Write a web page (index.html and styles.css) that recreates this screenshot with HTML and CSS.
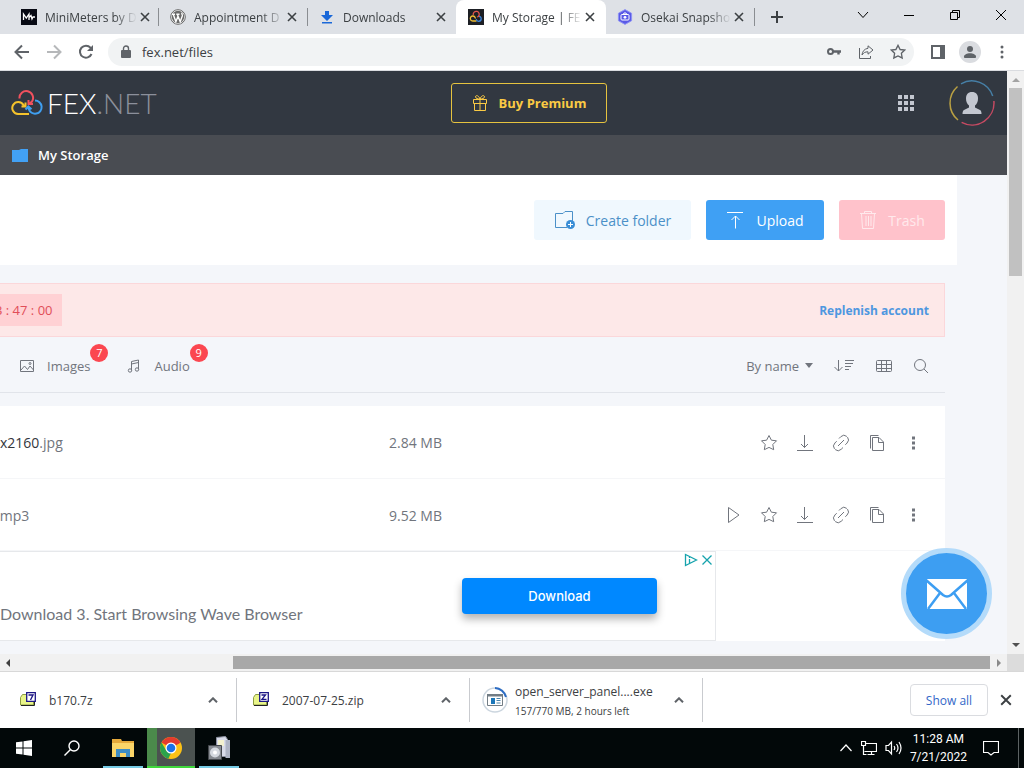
FILE: index.html
```html
<!DOCTYPE html>
<html lang="en">
<head>
<meta charset="UTF-8">
<meta name="viewport" content="width=device-width, initial-scale=1.0">
<title>My Storage | FEX.NET</title>
<link rel="stylesheet" href="styles.css">
</head>
<body>

<!-- shared icons -->
<svg class="sprite" width="0" height="0" aria-hidden="true">
    <symbol id="x" viewBox="0 0 10 10"><path d="M1 1l8 8M9 1L1 9"/></symbol>
    <symbol id="up" viewBox="0 0 10 6"><path d="M1 5.300l4-4 4 4"/></symbol>
    <symbol id="play" viewBox="0 0 18 18"><path d="M4.500 1.500v15L15 9z"/></symbol>
    <symbol id="star" viewBox="0 0 18 18"><path d="M9 1.500l2.400 4.700 5.100.6-3.700 3.700.9 5.200L9 13.400l-4.700 2.300.9-5.200L1.500 6.800l5.100-.6z"/></symbol>
    <symbol id="down" viewBox="0 0 18 18"><path d="M8.500 1v12.500M5 10l3.500 3.500L12 10M1 16.500h16"/></symbol>
    <symbol id="link" viewBox="0 0 18 18"><path d="M6 12l6-6M7 4.500l1.800-1.800a4.400 4.400 0 0 1 6.300 0 4.400 4.400 0 0 1 0 6.300l-1.800 1.800M11 13.500l-1.800 1.800a4.400 4.400 0 0 1-6.300 0 4.400 4.400 0 0 1 0-6.300l1.800-1.800" stroke-dasharray="9 1"/></symbol>
    <symbol id="copy" viewBox="0 0 18 18"><path d="M2.500 14.500v-13h8M4.500 3.500h6.500l4.500 4.500v8.500h-11zM10.500 3.500v5h5"/></symbol>
    <symbol id="dots" viewBox="0 0 18 18"><path class="solid" d="M8 2.500h3v3H8zM8 7.500h3v3H8zM8 12.500h3v3H8z"/></symbol>
    <symbol id="archive" viewBox="0 0 16 16"><path fill="#e9f58a" stroke="#8d9c42" d="M.5 5.500l2-3h11v10.500H.5z"/><path d="M1 13.500h13.500v-4" fill="none" stroke="#222"/><path fill="#fff" stroke="#1d1685" stroke-width="1.300" d="M6.700.7h8.600v8.600H6.700z"/></symbol>
</svg>

<div class="tabs">
    <div class="tab">
        <svg class="favicon" viewBox="0 0 16 16"><path fill="#080a14" d="M0 0h16v16H0z"/><path d="M2.500 11V5l2.800 4L8 5v6M8 8.500l2-2 1 3.500 1-2h2" fill="none" stroke="#fff" stroke-width="1.300"/></svg>
        <span class="tab-title">MiniMeters by D</span>
        <button class="tab-close" aria-label="Close tab"><svg><use href="#x"/></svg></button>
    </div>
    <div class="tab">
        <svg class="favicon" viewBox="0 0 16 16"><circle cx="8" cy="8" r="7.300" fill="#fff" stroke="#666" stroke-width="1"/><circle cx="8" cy="8" r="6.200" fill="#6a6a6a"/><path d="M2 5.200h3M6.300 5.200h3.200M3.200 5.200l2.700 7.500L8 7.300M7.300 5.200l2.900 7.500L12.300 7c.4-1.200-.8-2-.4-3.200" fill="none" stroke="#fff" stroke-width="1.400"/></svg>
        <span class="tab-title">Appointment D</span>
        <button class="tab-close" aria-label="Close tab"><svg><use href="#x"/></svg></button>
    </div>
    <div class="tab">
        <svg class="favicon" viewBox="0 0 16 16"><path fill="#1a68d8" d="M6 2h4v4h4l-6 6-6-6h4zM3 13h10v1.500H3z"/></svg>
        <span class="tab-title">Downloads</span>
        <button class="tab-close" aria-label="Close tab"><svg><use href="#x"/></svg></button>
    </div>
    <div class="tab active">
        <svg class="favicon" viewBox="0 0 16 16"><path fill="#1d1f24" d="M0 0h16v16H0z"/><g fill="none" stroke-width="1.300"><path stroke="#e4544e" d="M5.300 6a3 3 0 1 1 5 1.500L9 8"/><path stroke="#f0be35" d="M8.500 12H4.800a2.500 2.500 0 1 1 2-4l.8 1.500"/><path stroke="#3c86dc" d="M11 7.300a2.500 2.500 0 1 1-2.800 2.900"/></g></svg>
        <span class="tab-title">My Storage | FE</span>
        <button class="tab-close" aria-label="Close tab"><svg><use href="#x"/></svg></button>
    </div>
    <div class="tab">
        <svg class="favicon" viewBox="0 0 16 16"><path fill="#5a5ae6" stroke="#8f93f5" d="M8 .6l6.600 3.700v7.400L8 15.400l-6.600-3.700V4.300z"/><rect x="4" y="5.500" width="8" height="5.500" rx="1" fill="none" stroke="#fff"/><circle cx="8" cy="8.300" r="1.400" fill="#fff"/><path d="M6.500 5l.5-1h2l.5 1" stroke="#fff" fill="none"/></svg>
        <span class="tab-title">Osekai Snapsho</span>
        <button class="tab-close" aria-label="Close tab"><svg><use href="#x"/></svg></button>
    </div>
    <button class="new-tab" aria-label="New tab"><svg width="12" height="12" viewBox="0 0 12 12"><path d="M6 0v12M0 6h12"/></svg></button>
    <div class="window-buttons">
        <button aria-label="Search tabs"><svg viewBox="0 0 12 12"><path d="M1 3l5 5.500L11 3"/></svg></button>
        <button aria-label="Minimize"><svg viewBox="0 0 12 12"><path d="M1 6.500h10"/></svg></button>
        <button aria-label="Restore"><svg viewBox="0 0 12 12"><path d="M1.500 3.500h7v7h-7zM3.500 3V1.500h7v7H9"/></svg></button>
        <button aria-label="Close"><svg viewBox="0 0 12 12"><path d="M1 1l10 10M11 1L1 11"/></svg></button>
    </div>
</div>

<div class="navbar">
    <button aria-label="Back"><svg viewBox="0 0 16 16"><path d="M15 8H2M8 1.500L1.500 8 8 14.500"/></svg></button>
    <button class="faded" aria-label="Forward"><svg viewBox="0 0 16 16"><path d="M1 8h13M8 1.500L14.500 8 8 14.500"/></svg></button>
    <button aria-label="Reload"><svg viewBox="0 0 16 16"><path d="M13.500 10a6 6 0 1 1-1-6.300L14 5.500"/><path class="fill" d="M15 1v6H9z"/></svg></button>
    <div class="address">
        <svg class="lock" viewBox="0 0 10 14"><path d="M1 5h8a1 1 0 0 1 1 1v6a1 1 0 0 1-1 1H1a1 1 0 0 1-1-1V6a1 1 0 0 1 1-1z" fill="#5f6368"/><path d="M2.500 6V3.500a2.500 2.500 0 0 1 5 0V6" fill="none" stroke="#5f6368" stroke-width="1.400"/></svg>
        <input type="text" value="fex.net/files" aria-label="Address">
        <button aria-label="Passwords"><svg viewBox="0 0 16 16"><circle cx="4.500" cy="7.500" r="2.500"/><path d="M7 7.500h8M12.500 7.500v3" stroke-width="2.400"/></svg></button>
        <button aria-label="Share"><svg class="thin" viewBox="0 0 16 16"><path d="M1.500 4v10.500h11V12M10 1.800l5 4.200-5 4.200V7.800c-3 0-4.500 1-6 3.200.3-3.700 2.500-6.200 6-6.700z"/></svg></button>
        <button aria-label="Bookmark"><svg class="medium" viewBox="0 0 18 18"><use href="#star"/></svg></button>
    </div>
    <button aria-label="Side panel"><svg viewBox="0 0 16 16"><path d="M2 2h12v12H2z"/><path class="fill" d="M10 2h4v12h-4z"/></svg></button>
    <button class="profile" aria-label="Profile"><svg viewBox="0 0 16 16"><circle class="fill" cx="8" cy="5" r="3"/><path class="fill" d="M2 14v-1.500c0-2 3-3.300 6-3.300s6 1.300 6 3.300V14z"/></svg></button>
    <button aria-label="Menu"><svg viewBox="0 0 16 16"><circle class="fill" cx="8" cy="3" r="1.500"/><circle class="fill" cx="8" cy="8" r="1.500"/><circle class="fill" cx="8" cy="13" r="1.500"/></svg></button>
</div>

<div class="viewport">
    <div class="page">
        <header class="site-header">
            <a class="logo" href="#">
                <svg width="32" height="26" viewBox="0 0 32 26" fill="none" stroke-width="2"><path stroke="#f0515e" d="M8.500 8.500a6.800 6.800 0 1 1 12.500 3l-2 1.800M17.500 10v4h4.500"/><path stroke="#f5c32c" d="M18 24H7a6 6 0 1 1 5.500-9l1 1.500M14.500 12.500v4h-4"/><path stroke="#3f9ff0" d="M24 10.500a6.600 6.600 0 1 1-6.300 8.500l-.2-2M14.500 19.500l2.800-3 3.200 2.800"/></svg>
                <span>FEX<em>.NET</em></span>
            </a>
            <button class="premium">
                <svg width="16" height="18" viewBox="0 0 16 18"><path d="M1.500 5.500h13v4h-13zM2.500 9.500h11v7h-11zM8 5.500v11M8 5C6 5 3.500 4.500 3.500 2.800S6.500.8 8 5c1.500-4.200 4.500-3.900 4.500-2.200S10 5 8 5z"/></svg>
                Buy Premium
            </button>
            <div class="account">
                <button class="apps" aria-label="Services"><svg width="16" height="16" viewBox="0 0 16 16"><path d="M0 0h4v4H0zM6 0h4v4H6zM12 0h4v4h-4zM0 6h4v4H0zM6 6h4v4H6zM12 6h4v4h-4zM0 12h4v4H0zM6 12h4v4H6zM12 12h4v4h-4z"/></svg></button>
                <button class="avatar" aria-label="Account"><svg width="46" height="46" viewBox="0 0 46 46" fill="none" stroke-width="1.500"><path stroke="#467fa6" d="M12 3.800A22 22 0 0 1 43.700 16"/><path stroke="#c64a62" d="M44.900 21a22 22 0 0 1-32.300 21.300"/><path stroke="#b9a043" d="M9 40A22 22 0 0 1 8.500 6.500"/><path fill="#c3c7d0" d="M23 12c4 0 6 2.500 6 6.500 0 3-1 5.500-3 7v2l5 2.500c1 .5 1.500 2 1.500 4h-19c0-2 .5-3.500 1.500-4l5-2.500v-2c-2-1.500-3-4-3-7 0-4 2-6.500 6-6.500z"/></svg></button>
            </div>
        </header>
        <nav class="crumbs">
            <svg width="16" height="14" viewBox="0 0 16 14"><path fill="#42a1f5" d="M0 2h7l2-1h7v13H0z"/></svg>
            <a href="#">My Storage</a>
        </nav>

        <div class="actions">
            <button class="btn create"><svg width="22" height="20" viewBox="0 0 22 20"><path d="M13 17.500H1.500v-14H9l2-2h7.500V11"/><circle cx="16.500" cy="14.500" r="4.500" fill="#3a8ed6" stroke="none"/><path d="M16.500 12v5M14 14.500h5" stroke="#fff"/></svg>Create folder</button>
            <button class="btn upload"><svg width="18" height="18" viewBox="0 0 18 18"><path d="M1 1.500h16M9.500 17.500V5M5.500 9l4-4 4 4"/></svg>Upload</button>
            <button class="btn trash"><svg width="18" height="20" viewBox="0 0 18 20"><path d="M1 3.500h16M5.500 3.500v-2h7v2M2.500 3.500l1 15h11l1-15M7 6v10M9.500 6v10M12 6v10"/></svg>Trash</button>
        </div>

        <div class="alert">
            <span class="timer">3 : 47 : 00</span>
            <a href="#">Replenish account</a>
        </div>

        <div class="filters">
            <button class="filter"><svg width="16" height="16" viewBox="0 0 16 16"><path d="M1.500 2.500h13v11h-13zM2 12l3.500-4 3 3.500L11 8l3.500 4"/><circle cx="11" cy="5.500" r="1"/></svg>Images<span class="badge">7</span></button>
            <button class="filter"><svg width="16" height="16" viewBox="0 0 16 16"><path d="M5.500 12.500v-9l7-1.500v9.500M5.500 6l7-1.500"/><circle cx="4" cy="12.500" r="1.700"/><circle cx="11" cy="11.500" r="1.700"/></svg>Audio<span class="badge">9</span></button>
            <button class="sort">By name <span class="caret"></span></button>
            <button aria-label="Sort order"><svg width="22" height="16" viewBox="0 0 22 16"><path d="M5.500 2v11M1.500 9l4 4 4-4M12 2.500h9M12 5.500h8M12 8.500h6M12 11.500h4"/></svg></button>
            <button aria-label="Grid view"><svg width="18" height="16" viewBox="0 0 18 16"><rect x="1.500" y="2.500" width="15" height="11" rx="1"/><path d="M1.500 6.500h15M1.500 10.500h15M6.500 2.500v11M11.500 2.500v11"/></svg></button>
            <button aria-label="Search"><svg width="16" height="16" viewBox="0 0 16 16"><circle cx="7" cy="7" r="5.500"/><path d="M11 11l4 4"/></svg></button>
        </div>

        <div class="files">
            <table>
                <tr>
                    <td class="name"><span><b>0x2160</b>.jpg</span></td>
                    <td class="size">2.84 MB</td>
                    <td><div class="tools">
                        <button aria-label="Favourite"><svg><use href="#star"/></svg></button>
                        <button aria-label="Download"><svg><use href="#down"/></svg></button>
                        <button aria-label="Get link"><svg><use href="#link"/></svg></button>
                        <button aria-label="Copy"><svg><use href="#copy"/></svg></button>
                        <button aria-label="More"><svg><use href="#dots"/></svg></button>
                    </div></td>
                </tr>
                <tr>
                    <td class="name"><span class="short">.mp3</span></td>
                    <td class="size">9.52 MB</td>
                    <td><div class="tools">
                        <button aria-label="Play"><svg><use href="#play"/></svg></button>
                        <button aria-label="Favourite"><svg><use href="#star"/></svg></button>
                        <button aria-label="Download"><svg><use href="#down"/></svg></button>
                        <button aria-label="Get link"><svg><use href="#link"/></svg></button>
                        <button aria-label="Copy"><svg><use href="#copy"/></svg></button>
                        <button aria-label="More"><svg><use href="#dots"/></svg></button>
                    </div></td>
                </tr>
            </table>
            <div class="ad">
                <p>Download 3. Start Browsing Wave Browser</p>
                <button class="ad-download">Download</button>
                <div class="ad-marks">
                    <a href="#" aria-label="About this ad"><svg width="14" height="14" viewBox="0 0 14 14"><path d="M1.500 1.500v11l11-5.500zM5.500 6v4M5.500 4v1"/></svg></a>
                    <button aria-label="Close ad"><svg width="12" height="14" viewBox="0 0 12 14"><path d="M1.500 2.500l9 9M10.500 2.500l-9 9"/></svg></button>
                </div>
            </div>
        </div>

        <button class="chat" aria-label="Contact support">
            <svg width="42" height="32" viewBox="0 0 42 32"><path fill="#fff" d="M1 1h40v30H1z"/><path d="M0 2l17 15q4 3 8 0L42 2M2 31l12-16M40 31L28 15" fill="none" stroke="#3d9ef2" stroke-width="2.500"/></svg>
        </button>
    </div>
    <div class="vscroll">
        <svg viewBox="0 0 8 4"><path fill="#a3a3a3" d="M0 4l4-4 4 4z"/></svg>
        <div class="vthumb"></div>
        <svg viewBox="0 0 8 4"><path fill="#505050" d="M0 0l4 4 4-4z"/></svg>
    </div>
</div>
<div class="hscroll">
    <svg viewBox="0 0 4 8"><path fill="#404040" d="M4 0L0 4l4 4z"/></svg>
    <div class="track"><div class="hspace"></div><div class="hthumb"></div></div>
    <svg viewBox="0 0 4 8"><path fill="#8a8a8a" d="M0 0l4 4-4 4z"/></svg>
    <div class="corner"></div>
</div>

<div class="shelf">
    <div class="download">
        <svg class="file-icon" viewBox="0 0 16 16"><use href="#archive"/><path d="M8.500 3h4.500l-2.500 5" fill="none" stroke="#1d1685" stroke-width="1.400"/></svg>
        <span>b170.7z</span>
        <button aria-label="Options"><svg><use href="#up"/></svg></button>
    </div>
    <div class="download">
        <svg class="file-icon" viewBox="0 0 16 16"><use href="#archive"/><path d="M8.500 3h4L9 7.300h4.500" fill="none" stroke="#1d1685" stroke-width="1.300"/></svg>
        <span>2007-07-25.zip</span>
        <button aria-label="Options"><svg><use href="#up"/></svg></button>
    </div>
    <div class="download running">
        <svg class="progress" viewBox="0 0 26 26"><circle cx="13" cy="13" r="12" fill="none" stroke="#ccd6df" stroke-width="1.500"/><path d="M13 1a12 12 0 0 1 11 9" fill="none" stroke="#2c6cc4" stroke-width="2"/><path fill="#fff" stroke="#727d85" d="M5.500 7.500h15v11h-15z"/><path fill="#727d85" d="M5 7h16v2.500H5z"/><path fill="#1c77b9" d="M9 11h4v6H9z"/><path d="M14.500 11.500h4M14.500 13.500h4M14.500 16h4" stroke="#4b84aa"/></svg>
        <span>open_server_panel....exe<small>157/770 MB, 2 hours left</small></span>
        <button aria-label="Options"><svg><use href="#up"/></svg></button>
    </div>
    <button class="show-all">Show all</button>
    <button class="shelf-close" aria-label="Close downloads bar"><svg><use href="#x"/></svg></button>
</div>

<div class="taskbar">
    <button aria-label="Start"><svg width="16" height="16" viewBox="0 0 16 16" fill="#fff"><path d="M0 2.300l6.500-.9v6.100H0zM7.500 1.200L16 0v7.500H7.500zM0 8.500h6.500v6.100L0 13.700zM7.500 8.500H16V16l-8.500-1.200z"/></svg></button>
    <button aria-label="Search"><svg width="16" height="16" viewBox="0 0 16 16" fill="none" stroke="#fff" stroke-width="1.400"><circle cx="10" cy="6" r="5"/><path d="M6.500 9.500l-6 6"/></svg></button>
    <div class="windows">
        <button aria-label="File Explorer"><svg width="22" height="20" viewBox="0 0 22 20"><path fill="#e5a93b" d="M0 1h9l1 2h12v16H0z"/><path fill="#fbd568" d="M0 5h22v14H0z"/><path fill="#3f8dc4" d="M4 11h14v8h-4v-4H8v4H4z"/></svg></button>
        <button class="current" aria-label="Google Chrome"><svg width="22" height="22" viewBox="0 0 22 22"><circle cx="11" cy="11" r="11" fill="#fbc116"/><path fill="#e33b2e" d="M11 11L1.500 5.500a11 11 0 0 1 19 0z"/><path fill="#e33b2e" d="M11 5.500h9.500L11 11z"/><path fill="#2ba24c" d="M1.500 5.500L6.500 14l4.500 2-2.700 5.700A11 11 0 0 1 1.500 5.500z"/><circle cx="11" cy="11" r="5.500" fill="#fff"/><circle cx="11" cy="11" r="4.300" fill="#1b72e8"/></svg></button>
        <button aria-label="Disk tool"><svg width="22" height="24" viewBox="0 0 22 24"><path fill="#d8dbe8" stroke="#8c90a0" d="M8.500 1.500l9-1 2 3v17h-11z"/><path fill="#aeb4c4" d="M17.500 4H22v18h-4.500z"/><path fill="#f3f1cf" d="M10 4h6v6h-6z"/><path fill="#868a90" stroke="#45484d" d="M.5 9.500h13v14H.5z"/><circle cx="7" cy="16.500" r="5" fill="#d5d9df"/><circle cx="7" cy="16.500" r="2" fill="#fff"/></svg></button>
    </div>
    <div class="tray">
        <button aria-label="Hidden icons"><svg width="14" height="16" viewBox="0 0 14 16"><path d="M1.500 11L7 5l5.500 6"/></svg></button>
        <button aria-label="Network"><svg width="16" height="16" viewBox="0 0 16 16"><path d="M5 3.500h10.500v8H3.500M10.500 12v3M6.500 14.500h7M.5 1.500h4v4h-4zM2.500 6v8.500h3"/></svg></button>
        <button aria-label="Volume"><svg width="17" height="16" viewBox="0 0 17 16"><path d="M1 5.500h2.500l3-3.500v12l-3-3.500H1zM9 6q1.500 2 0 4M11.500 4q3 4 0 8M14 2q4 6 0 12"/></svg></button>
        <button class="clock">11:28 AM<br>7/21/2022</button>
        <button class="notices" aria-label="Notifications"><svg width="16" height="18" viewBox="0 0 16 18"><path d="M.5 2.500h15v11H11L8 16l-3-2.500H.5z"/></svg></button>
    </div>
</div>

</body>
</html>
```
FILE: styles.css
```css
* {
    box-sizing: border-box;
}

body {
    margin: 0;
    height: 100vh;
    display: flex;
    flex-direction: column;
    overflow: hidden;
    font-family: "Open Sans", "Noto Sans", sans-serif;
    font-size: 12px;
    color: #3c4043;
}

button {
    display: flex;
    align-items: center;
    justify-content: center;
    padding: 0;
    border: none;
    background: none;
    color: inherit;
    font: inherit;
    cursor: pointer;
}

a {
    text-decoration: none;
}

.sprite {
    position: absolute;
}

/* browser tabs */
.tabs {
    display: flex;
    flex: none;
    height: 34px;
    padding-left: 9px;
    background: #dee1e6;
}

.tab {
    display: flex;
    align-items: center;
    flex: 0 1 150px;
    min-width: 0;
    padding: 0 8px 0 12px;
    position: relative;
}

.tab + .tab {
    margin-left: -1px;
}

.tab::after {
    content: "";
    position: absolute;
    right: 0;
    top: 8px;
    width: 1px;
    height: 18px;
    background: #8a8d91;
}

.tab.active {
    background: #fff;
    border-radius: 8px 8px 0 0;
}

.tab.active::after,
.tab:nth-child(3)::after {
    display: none;
}

.favicon {
    flex: none;
    width: 16px;
    height: 16px;
    margin-right: 8px;
}

.tab-title {
    flex: 1;
    white-space: nowrap;
    -webkit-mask-image: linear-gradient(to right, #000 75%, transparent);
    mask-image: linear-gradient(to right, #000 75%, transparent);
}

.tab-close {
    flex: none;
    width: 16px;
    height: 16px;
}

.tab-close svg,
.shelf-close svg {
    width: 10px;
    height: 10px;
    stroke: #3c4043;
    stroke-width: 1.6;
}

.shelf-close svg {
    width: 12px;
    height: 12px;
}

.new-tab {
    width: 44px;
}

.new-tab svg {
    stroke: #3c4043;
    stroke-width: 2;
}

.window-buttons {
    display: flex;
    margin-left: auto;
}

.window-buttons button {
    width: 46px;
    height: 29px;
}

.window-buttons svg {
    width: 12px;
    height: 12px;
    fill: none;
    stroke: #000;
}

/* address bar */
.navbar {
    display: flex;
    align-items: center;
    flex: none;
    height: 37px;
    padding: 0 6px;
    background: #fff;
    border-bottom: 1px solid #dadce0;
}

.navbar button {
    width: 32px;
    height: 28px;
}

.navbar button svg {
    width: 16px;
    height: 16px;
    fill: none;
    stroke: #5f6368;
    stroke-width: 2;
}

.navbar button .thin {
    stroke-width: 1;
}

.navbar button .medium {
    stroke-width: 1.5;
}

.navbar .fill {
    fill: #5f6368;
    stroke: none;
}

.navbar .faded {
    opacity: 0.45;
}

.address {
    display: flex;
    align-items: center;
    flex: 1;
    height: 28px;
    margin: 0 8px 0 6px;
    padding-left: 13px;
    border-radius: 14px;
    background: #f1f3f4;
}

.lock {
    width: 10px;
    height: 14px;
    margin-right: 11px;
}

.address input {
    flex: 1;
    min-width: 0;
    padding: 0;
    border: none;
    outline: none;
    background: none;
    color: #3c4043;
    font: 13px "Open Sans", "Noto Sans", sans-serif;
}

.profile svg {
    border-radius: 50%;
    box-shadow: 0 0 0 3px #dadce0;
    background: #dadce0;
}

/* web page */
.viewport {
    display: flex;
    flex: 1;
    min-height: 0;
}

.page {
    flex: 1;
    min-width: 0;
    position: relative;
    overflow: hidden;
    background: #f4f6fa;
    color: #71757d;
    font-size: 14px;
}

.site-header {
    display: grid;
    grid-template-columns: 53fr 156px 47fr;
    align-items: center;
    height: 64px;
    background: #323841;
}

.logo {
    display: flex;
    align-items: center;
    padding-left: 11px;
    color: #fff;
    font-family: Lato, sans-serif;
    font-size: 28px;
    font-weight: 300;
}

.logo span {
    margin-left: 4px;
}

.logo em {
    color: #8c909b;
    font-style: normal;
}

.premium {
    height: 40px;
    gap: 11px;
    border: 1px solid #e6c33f;
    border-radius: 3px;
    color: #fbca44;
    font-size: 13px;
    font-weight: 700;
}

.premium svg,
.btn svg,
.filters svg,
.tools svg {
    fill: none;
    stroke: currentColor;
}

.account {
    display: flex;
    align-items: center;
    justify-content: flex-end;
    gap: 35px;
    padding-right: 12px;
}

.apps svg {
    fill: #c3c7d0;
}

.crumbs {
    display: flex;
    align-items: center;
    gap: 10px;
    height: 40px;
    padding-left: 12px;
    background: #494c52;
}

.crumbs a {
    color: #fff;
    font-size: 13px;
    font-weight: 600;
}

.actions {
    display: flex;
    align-items: center;
    justify-content: flex-end;
    gap: 15px;
    height: 90px;
    margin-right: 50px;
    padding-right: 12px;
    background: #fff;
}

.btn {
    height: 40px;
    border-radius: 3px;
}

.create {
    width: 157px;
    gap: 10px;
    background: #f0f8fe;
    color: #4b90c8;
}

.upload {
    width: 118px;
    gap: 12px;
    background: #3fa0f4;
    color: #fff;
    font-weight: 500;
}

.trash {
    width: 106px;
    gap: 11px;
    background: #ffc2cb;
    color: #ffe9ec;
    font-weight: 500;
}

.alert {
    display: flex;
    align-items: center;
    justify-content: space-between;
    height: 54px;
    margin: 18px 62px 0 -12px;
    padding-right: 15px;
    border: 1px solid #fbd7da;
    background: #fde8e8;
}

.alert a {
    color: #4e97e0;
    font-size: 12px;
    font-weight: 700;
}

.timer {
    padding: 0 9px 0 6px;
    background: #ffd1d4;
    color: #e14e58;
    font-size: 13px;
    line-height: 32px;
    white-space: nowrap;
}

.filters {
    display: flex;
    align-items: center;
    gap: 20px;
    height: 56px;
    margin-right: 62px;
    padding: 2px 16px 0 19px;
    border-bottom: 1px solid #e1e4ea;
    font-size: 13px;
}

.filter {
    gap: 12px;
    margin-right: 16px;
    position: relative;
}

.badge {
    position: absolute;
    left: 100%;
    bottom: 13px;
    width: 18px;
    border-radius: 50%;
    background: #fb4750;
    color: #fff;
    font-size: 11px;
    line-height: 18px;
}

.sort {
    gap: 6px;
    margin-left: auto;
}

.caret {
    border: 4px solid transparent;
    border-top: 5px solid #71757d;
    border-bottom: none;
}

.files {
    margin: 13px 62px 0 0;
    background: #fff;
}

.files table {
    width: 100%;
    table-layout: fixed;
    border-collapse: collapse;
}

.files td {
    height: 72px;
    padding: 2px 0 0;
    border-bottom: 1px solid #f5f6f8;
}

.files .name {
    width: 389px;
}

.files .size {
    width: 120px;
}

.name span {
    margin-left: -8px;
}

.name .short {
    margin-left: -4px;
}

.name b {
    color: #33363c;
    font-weight: 400;
}

.tools {
    display: flex;
    justify-content: flex-end;
    gap: 18px;
    padding-right: 23px;
}

.tools svg {
    width: 18px;
    height: 18px;
}

.solid {
    fill: #71757d;
    stroke: none;
}

.ad {
    display: flex;
    align-items: flex-start;
    width: 716px;
    max-width: 100%;
    height: 90px;
    border: 1px solid #e6e8eb;
    border-left: none;
    font-family: Lato, sans-serif;
}

.ad p {
    flex: 1;
    margin: 52px 0 0;
    font-size: 16px;
}

.ad-download {
    width: 195px;
    height: 36px;
    margin: 26px 27px 0 0;
    border-radius: 4px;
    background: #0088ff;
    box-shadow: 0 5px 8px rgba(0, 0, 0, 0.3);
    color: #fff;
    font-family: Inter, sans-serif;
    font-size: 13px;
    font-weight: 500;
}

.ad-marks {
    display: flex;
    gap: 3px;
    padding: 1px 2px 0 0;
}

.ad-marks svg {
    display: block;
    fill: none;
    stroke: #16a3ad;
    stroke-width: 1.3;
}

.chat {
    position: absolute;
    right: 15px;
    bottom: 15px;
    width: 91px;
    height: 91px;
    border: 5px solid #b4dbfa;
    border-radius: 50%;
    background: #3d9ef2;
}

/* scrollbars */
.vscroll {
    display: flex;
    flex-direction: column;
    align-items: center;
    width: 17px;
    padding: 7px 0;
    background: #f1f1f1;
}

.vscroll svg {
    width: 8px;
    height: 4px;
}

.vscroll svg:last-child {
    margin-top: auto;
}

.vthumb {
    width: 13px;
    height: 33%;
    margin-top: 6px;
    background: #c1c1c1;
}

.hscroll {
    display: flex;
    align-items: center;
    flex: none;
    height: 18px;
    padding-left: 6px;
    background: #f1f1f1;
    border-bottom: 1px solid #d8d8d8;
}

.hscroll svg {
    width: 4px;
    height: 8px;
}

.track {
    display: flex;
    flex: 1;
    margin: 0 7px;
}

.hspace {
    flex: 2;
}

.hthumb {
    flex: 7;
    height: 13px;
    background: #a8a8a8;
}

.corner {
    align-self: stretch;
    width: 17px;
    margin-left: 6px;
    background: #dcdcdc;
}

/* downloads bar */
.shelf {
    display: flex;
    align-items: center;
    flex: none;
    height: 56px;
    background: #fff;
}

.download {
    display: flex;
    align-items: center;
    flex: 0 1 233px;
    height: 44px;
    padding: 0 18px 0 16px;
    border-right: 1px solid #c9cbcf;
}

.download:first-child {
    flex-basis: 237px;
    padding-left: 20px;
}

.file-icon {
    width: 16px;
    height: 16px;
    margin-right: 13px;
}

.download small {
    display: block;
    margin-top: 4px;
    font-size: 10px;
}

.download button {
    margin-left: auto;
}

.download button svg {
    width: 10px;
    height: 6px;
    fill: none;
    stroke: #5f6368;
    stroke-width: 2;
}

.running {
    padding-left: 12px;
}

.progress {
    width: 26px;
    height: 26px;
    margin-right: 7px;
}

.show-all {
    width: 78px;
    height: 32px;
    margin: 0 12px 0 auto;
    border: 1px solid #dadce0;
    border-radius: 4px;
    color: #3367c8;
}

.shelf-close {
    margin-right: 12px;
}

/* taskbar */
.taskbar {
    display: flex;
    flex: none;
    height: 40px;
    background: #020809;
    color: #fff;
}

.taskbar > button {
    width: 48px;
}

.windows {
    display: flex;
    margin-left: 3px;
}

.windows button {
    width: 48px;
    position: relative;
}

.windows button::after {
    content: "";
    position: absolute;
    bottom: 0;
    left: 4px;
    right: 4px;
    height: 2px;
    background: #76cbe5;
}

.windows .current {
    background: linear-gradient(to right, #4b8a4b 10px, #4b5250 10px);
}

.windows .current::after {
    left: 0;
    right: 0;
    background: #3fd83c;
}

.tray {
    display: flex;
    align-items: center;
    gap: 8px;
    margin-left: auto;
    margin-right: 5px;
    padding-right: 19px;
    border-right: 1px solid #5c6263;
}

.tray svg {
    fill: none;
    stroke: #fff;
    stroke-width: 1.2;
}

.clock {
    line-height: 18px;
    font-family: Roboto, sans-serif;
}

.notices {
    margin-left: 8px;
}
```
